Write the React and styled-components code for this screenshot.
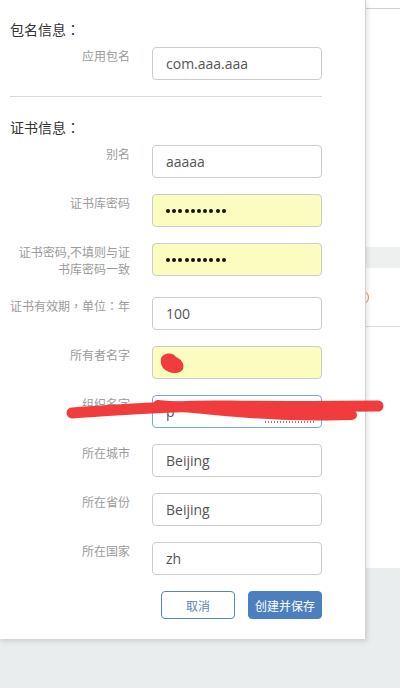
import React from "react";
import styled, { createGlobalStyle } from "styled-components";

const GlobalStyle = createGlobalStyle`
  html, body { margin: 0; padding: 0; }
  body {
    font-family: "Noto Sans CJK SC", "Noto Sans", sans-serif;
    background: #e9eded;
  }
  * { box-sizing: border-box; }
`;

const Page = styled.div`
  position: relative;
  width: 400px;
  height: 688px;
  overflow: hidden;
  background: #e9eded;
`;

const BgCard = styled.div`
  height: 568px;
  background: #fff;
  display: flex;
  flex-direction: column;
  padding-left: 366px;
`;

const Rule = styled.div`
  height: 1px;
  background: ${(p) => p.$color || "#d4d4d4"};
  margin-top: ${(p) => p.$top}px;
`;

const Band = styled.div`
  height: 21px;
  background: #eef0f0;
  margin-top: ${(p) => p.$top}px;
`;

const StatusRow = styled.div`
  height: 58px;
  display: flex;
  align-items: center;
  margin-left: -12px;
`;

const OrangeRing = styled.span`
  width: 15px;
  height: 15px;
  border: 1.5px solid #e8894a;
  border-radius: 50%;
  margin-top: 1px;
`;

const Modal = styled.div`
  position: absolute;
  left: 0;
  top: 0;
  width: 366px;
  background: #fff;
  border-right: 1px solid #d2d2d2;
  box-shadow: 1px 2px 5px rgba(0, 0, 0, 0.14);
  padding: 19px 43px 20px 10px;
  z-index: 2;
`;

const SectionTitle = styled.div`
  font-size: 14px;
  line-height: 20px;
  color: #333;
  margin-bottom: 8px;
`;

const Punct = styled.span`
  font-family: "Noto Sans CJK TC", "Noto Sans CJK SC", sans-serif;
`;

const Divider = styled.div`
  height: 1px;
  background: #d9d9d9;
  margin: 0 0 20px;
`;

const Row = styled.div`
  display: grid;
  grid-template-columns: 120px 170px;
  column-gap: 22px;
  align-items: start;
  margin-bottom: 16px;
`;

const Label = styled.label`
  font-size: 12px;
  line-height: 17px;
  color: #9b9b9b;
  text-align: right;
  white-space: ${(p) => (p.$nowrap ? "nowrap" : "normal")};
  padding-bottom: ${(p) => (p.$multi ? 4 : 0)}px;
`;

const FieldWrap = styled.div`
  position: relative;
`;

const Input = styled.input`
  display: block;
  width: 170px;
  height: 33px;
  border: 1px solid ${(p) => (p.$focus ? "#78a9d6" : "#cccccc")};
  border-radius: 4px;
  background: ${(p) => (p.$auto ? "#fafdbf" : "#fff")};
  padding: 0 13px;
  font-family: "Open Sans", "Noto Sans", sans-serif;
  font-size: 14px;
  color: #555;
  outline: none;
`;

const Dots = styled.div`
  display: flex;
  align-items: center;
  width: 170px;
  height: 33px;
  border: 1px solid #cccccc;
  border-radius: 4px;
  background: #fafdbf;
  padding: 0 13px;
  gap: 2.2px;
`;

const Dot = styled.span`
  width: 4px;
  height: 4px;
  border-radius: 50%;
  background: #111;
`;

const Squiggle = styled.span`
  position: absolute;
  left: 112px;
  top: 26px;
  width: 50px;
  height: 2px;
  background-image: radial-gradient(circle, #d86a6a 0.8px, transparent 1px);
  background-size: 3px 2px;
`;

const Actions = styled.div`
  display: flex;
  justify-content: flex-end;
  gap: 13px;
`;

const Button = styled.button`
  width: 74px;
  height: 28px;
  border-radius: 4px;
  font-family: "Noto Sans CJK SC", sans-serif;
  font-size: 12px;
  padding: 0;
  cursor: pointer;
  border: 1px solid ${(p) => (p.$primary ? "#4d7fc0" : "#5a84bb")};
  background: ${(p) => (p.$primary ? "#4d7fc0" : "#fff")};
  color: ${(p) => (p.$primary ? "#fff" : "#5f81b5")};
`;

const Scribbles = styled.svg`
  position: absolute;
  left: 0;
  top: 0;
  width: 400px;
  height: 688px;
  pointer-events: none;
  z-index: 3;
`;

const Passwords = () => (
  <Dots>
    {Array.from({ length: 10 }).map((_, i) => (
      <Dot key={i} />
    ))}
  </Dots>
);

const FormRow = ({ label, multi, nowrap, children }) => (
  <Row>
    <Label $multi={multi} $nowrap={nowrap}>
      {label}
    </Label>
    <FieldWrap>{children}</FieldWrap>
  </Row>
);

export default function App() {
  return (
    <Page>
      <GlobalStyle />
      <BgCard>
        <Rule $top={8} $color="#cfcfcf" />
        <Band $top={238} />
        <StatusRow>
          <OrangeRing />
        </StatusRow>
        <Rule $top={0} $color="#dadada" />
      </BgCard>

      <Modal>
        <SectionTitle>
          包名信息<Punct>：</Punct>
        </SectionTitle>
        <FormRow label="应用包名">
          <Input readOnly value="com.aaa.aaa" />
        </FormRow>
        <Divider />
        <SectionTitle>
          证书信息<Punct>：</Punct>
        </SectionTitle>
        <FormRow label="别名">
          <Input readOnly value="aaaaa" />
        </FormRow>
        <FormRow label="证书库密码">
          <Passwords />
        </FormRow>
        <FormRow label="证书密码,不填则与证书库密码一致" multi>
          <Passwords />
        </FormRow>
        <FormRow
          nowrap
          label={
            <>
              证书有效期<Punct>，</Punct>单位<Punct>：</Punct>年
            </>
          }
        >
          <Input readOnly value="100" />
        </FormRow>
        <FormRow label="所有者名字">
          <Input readOnly $auto value="" />
        </FormRow>
        <FormRow label="组织名字">
          <Input readOnly $focus value="p" />
          <Squiggle />
        </FormRow>
        <FormRow label="所在城市">
          <Input readOnly value="Beijing" />
        </FormRow>
        <FormRow label="所在省份">
          <Input readOnly value="Beijing" />
        </FormRow>
        <FormRow label="所在国家">
          <Input readOnly value="zh" />
        </FormRow>
        <Actions>
          <Button>取消</Button>
          <Button $primary>创建并保存</Button>
        </Actions>
      </Modal>

      <Scribbles viewBox="0 0 400 688">
        <path
          d="M164 355 C169 352 174 354 176 357 C181 359 185 364 183 369 C181 374 172 374 167 371 C162 369 160 363 161 359 C161 357 162 356 164 355 Z"
          fill="#f03c3c"
        />
        <path
          d="M72 413 C120 410 170 405 230 406 C290 407 340 406 378 406"
          stroke="#f03c3c"
          strokeWidth="11"
          fill="none"
          strokeLinecap="round"
        />
        <path
          d="M158 405 C200 408 240 414 290 415 C320 416 340 415 352 415"
          stroke="#f03c3c"
          strokeWidth="10"
          fill="none"
          strokeLinecap="round"
        />
      </Scribbles>
    </Page>
  );
}
